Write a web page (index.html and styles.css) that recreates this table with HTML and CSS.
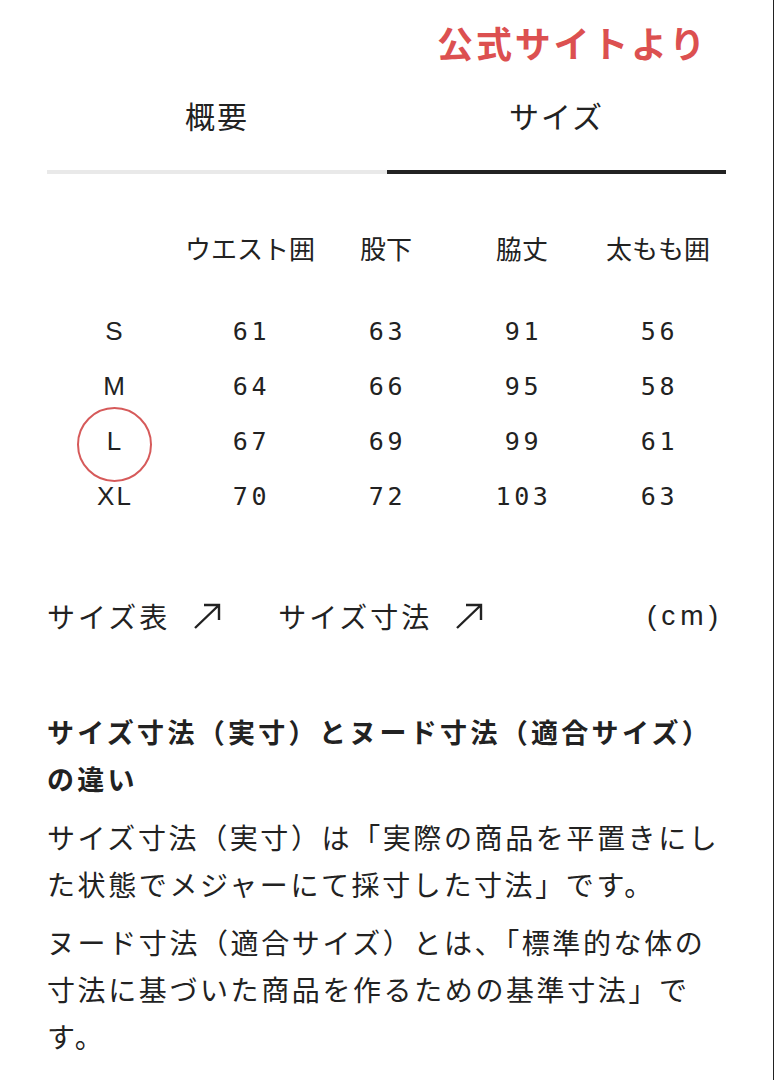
FILE: index.html
```html
<!DOCTYPE html>
<html lang="ja">
<head>
<meta charset="utf-8">
<link rel="stylesheet" href="styles.css">
</head>
<body>
<div class="page">
  <header class="top">
    <h1 class="source">公式サイトより</h1>
  </header>
  <nav class="tabs">
    <div class="tab">概要</div>
    <div class="tab active">サイズ</div>
  </nav>

  <div class="table">
    <div class="cell head"></div>
    <div class="cell head">ウエスト囲</div>
    <div class="cell head">股下</div>
    <div class="cell head">脇丈</div>
    <div class="cell head">太もも囲</div>

    <div class="cell size">S</div>
    <div class="cell num">61</div><div class="cell num">63</div><div class="cell num">91</div><div class="cell num">56</div>

    <div class="cell size">M</div>
    <div class="cell num">64</div><div class="cell num">66</div><div class="cell num">95</div><div class="cell num">58</div>

    <div class="cell size marked"><span class="ring"></span>L</div>
    <div class="cell num">67</div><div class="cell num">69</div><div class="cell num">99</div><div class="cell num">61</div>

    <div class="cell size">XL</div>
    <div class="cell num">70</div><div class="cell num">72</div><div class="cell num">103</div><div class="cell num">63</div>
  </div>

  <div class="links">
    <span class="link">サイズ表<svg class="arrow" viewBox="0 0 30 28"><path d="M3 26 L27 3 M12 3 H27 V18" fill="none" stroke="#222" stroke-width="2.4"/></svg></span>
    <span class="link">サイズ寸法<svg class="arrow" viewBox="0 0 30 28"><path d="M3 26 L27 3 M12 3 H27 V18" fill="none" stroke="#222" stroke-width="2.4"/></svg></span>
    <span class="unit">(cm)</span>
  </div>

  <section class="note">
    <h2 class="note-title">サイズ寸法（実寸）とヌード寸法（適合サイズ）の違い</h2>
    <p class="note-text">サイズ寸法（実寸）は「実際の商品を平置きにした状態でメジャーにて採寸した寸法」です。</p>
    <p class="note-text">ヌード寸法（適合サイズ）とは、「標準的な体の寸法に基づいた商品を作るための基準寸法」です。</p>
  </section>
</div>
</body>
</html>
```

FILE: styles.css
```css
html, body {
  margin: 0;
  padding: 0;
  background: #fff;
}
body {
  font-family: "Noto Sans CJK JP", "Noto Sans", sans-serif;
  color: #222;
}
.page {
  box-sizing: border-box;
  width: 774px;
  min-height: 1080px;
  border-right: 1px solid #222;
  padding: 17px 48px 0 47px;
  overflow: hidden;
}
.top {
  display: flex;
  justify-content: flex-end;
  padding-right: 17px;
}
.source {
  margin: 0;
  font-size: 36px;
  line-height: 50px;
  font-weight: 700;
  letter-spacing: 2.8px;
  color: #dc5050;
}
.tabs {
  display: grid;
  grid-template-columns: 340px 339px;
  margin-top: 28px;
}
.tab {
  text-align: center;
  font-size: 30px;
  line-height: 40px;
  letter-spacing: 2px;
  padding-bottom: 35px;
  border-bottom: 4px solid #e9e9e9;
}
.tab.active {
  border-bottom-color: #222;
}
.table {
  display: grid;
  grid-template-columns: repeat(5, 136px);
  grid-template-rows: 74px repeat(4, 55px);
  margin: 56px 0 0 -1px;
}
.cell {
  display: flex;
  align-items: center;
  justify-content: center;
}
.head {
  align-items: flex-start;
  font-size: 26px;
  line-height: 36px;
}
.size {
  font-family: "Liberation Sans", Arial, sans-serif;
  font-size: 26px;
  letter-spacing: 2px;
  padding-left: 2px;
}
.num {
  font-family: "DejaVu Sans Mono", "Liberation Mono", monospace;
  font-size: 25px;
  letter-spacing: 3.6px;
  padding-left: 3px;
}
.marked {
  position: relative;
}
.ring {
  position: absolute;
  left: 50%;
  top: 50%;
  width: 75px;
  height: 75px;
  margin: -35px 0 0 -37px;
  border: 2.5px solid #d65a5a;
  border-radius: 50%;
  box-sizing: border-box;
}
.links {
  display: flex;
  align-items: center;
  margin-top: 72px;
  font-size: 28px;
  line-height: 40px;
  letter-spacing: 3px;
}
.link {
  display: inline-flex;
  align-items: center;
  margin-right: 56px;
}
.arrow {
  width: 30px;
  height: 28px;
  margin-left: 22px;
}
.unit {
  margin-left: auto;
  font-family: "Liberation Sans", sans-serif;
  letter-spacing: 5px;
  margin-right: 2px;
}
.note {
  margin-top: 72px;
}
.note-title {
  margin: 0;
  font-size: 27px;
  line-height: 47px;
  font-weight: 700;
  letter-spacing: 3.3px;
}
.note-text {
  margin: 12px 0 0;
  font-size: 28px;
  line-height: 47px;
  letter-spacing: 2.6px;
}
.note-text + .note-text {
  margin-top: 11px;
}
```
